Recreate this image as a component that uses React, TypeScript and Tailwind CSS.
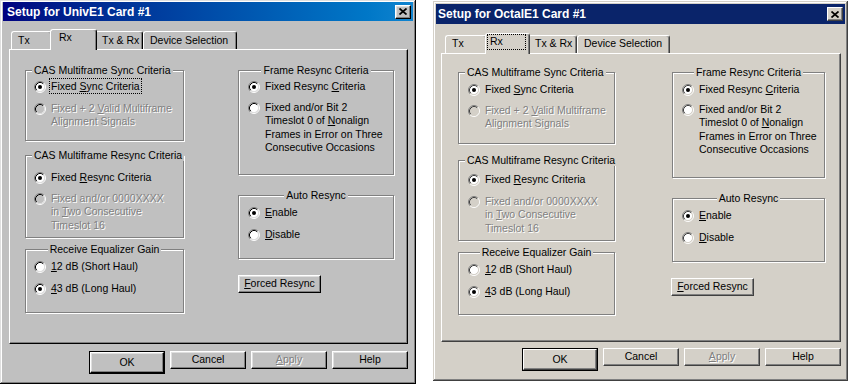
import type { ReactNode } from 'react';

type Skin = {
  face: string;
  dark: string;
  light: string;
  bg: string;
  edge: string;
  edgeR: string;
  btn: string;
};

const classic: Skin = {
  face: '#c0c0c0',
  dark: '#000000',
  light: '#dfdfdf',
  bg: 'bg-[#c0c0c0]',
  edge: 'border-r-black border-b-black',
  edgeR: 'border-r-black',
  btn: 'shadow-[inset_-1px_-1px_0_#808080,inset_1px_1px_0_#dfdfdf]',
};

const w2k: Skin = {
  face: '#d4d0c8',
  dark: '#404040',
  light: '#d4d0c8',
  bg: 'bg-[#d4d0c8]',
  edge: 'border-r-[#404040] border-b-[#404040]',
  edgeR: 'border-r-[#404040]',
  btn: 'shadow-[inset_-1px_-1px_0_#808080]',
};

const dim = 'text-[#808080] [text-shadow:1px_1px_0_#fff]';

function Radio({ skin, checked, disabled }: { skin: Skin; checked?: boolean; disabled?: boolean }) {
  return (
    <svg width="12" height="12" viewBox="0 0 12 12" className="mt-[1px] shrink-0">
      <circle cx="6" cy="6" r="4.5" fill={disabled ? skin.face : '#fff'} />
      <path d="M2.11 9.89A5.5 5.5 0 0 1 9.89 2.11" fill="none" stroke="#808080" />
      <path d="M2.82 9.18A4.5 4.5 0 0 1 9.18 2.82" fill="none" stroke={skin.dark} />
      <path d="M9.89 2.11A5.5 5.5 0 0 1 2.11 9.89" fill="none" stroke="#fff" />
      <path d="M9.18 2.82A4.5 4.5 0 0 1 2.82 9.18" fill="none" stroke={skin.light} />
      {checked && <circle cx="6" cy="6" r="2" fill="#000" />}
    </svg>
  );
}

function Option({
  skin,
  mt,
  checked,
  disabled,
  focus,
  children,
}: {
  skin: Skin;
  mt: string;
  checked?: boolean;
  disabled?: boolean;
  focus?: boolean;
  children: ReactNode;
}) {
  return (
    <div className={`flex items-start ${mt}`}>
      <Radio skin={skin} checked={checked} disabled={disabled} />
      <div className={`ml-[5px] leading-[13.5px] whitespace-nowrap ${disabled ? dim : ''}`}>
        {focus ? <span className="outline-1 outline-dotted outline-black outline-offset-[1px]">{children}</span> : children}
      </div>
    </div>
  );
}

function Group({
  skin,
  title,
  center,
  box,
  pad,
  children,
}: {
  skin: Skin;
  title: string;
  center?: boolean;
  box: string;
  pad: string;
  children: ReactNode;
}) {
  return (
    <div className={`border border-[#808080] shadow-[1px_1px_0_#fff,inset_1px_1px_0_#fff] ${box}`}>
      <div className={`-mt-[7px] flex h-[12px] leading-[12px] whitespace-nowrap ${center ? 'justify-center' : 'pl-[6px]'}`}>
        <span className={`px-[2px] ${skin.bg}`}>{title}</span>
      </div>
      <div className={pad}>{children}</div>
    </div>
  );
}

function Btn({
  skin,
  w,
  def,
  disabled,
  children,
}: {
  skin: Skin;
  w: string;
  def?: boolean;
  disabled?: boolean;
  children: ReactNode;
}) {
  const face = `flex h-full items-center justify-center border border-t-white border-l-white ${skin.edge} ${skin.btn} ${skin.bg} ${disabled ? dim : ''}`;
  if (def) {
    return (
      <div className={`${w} h-[23px] border border-black`}>
        <div className={face}>{children}</div>
      </div>
    );
  }
  return <div className={`${w} h-[23px] ${face}`}>{children}</div>;
}

function Close({ skin }: { skin: Skin }) {
  return (
    <div
      className={`flex h-[14px] w-[16px] items-center justify-center border border-t-white border-l-white ${skin.edge} ${skin.btn} ${skin.bg}`}
    >
      <svg width="8" height="7" viewBox="0 0 8 7">
        <path d="M0.5 0.5L7.5 6.5M7.5 0.5L0.5 6.5" stroke="#000" strokeWidth="1.7" />
      </svg>
    </div>
  );
}

function Tab({ skin, w, pad, children }: { skin: Skin; w: string; pad: string; children: ReactNode }) {
  return (
    <div
      className={`${w} h-[18px] rounded-t-[3px] border-t border-l border-r border-white ${skin.edgeR} shadow-[inset_-1px_0_0_#808080] pl-[6px] leading-[13px] whitespace-nowrap ${pad}`}
    >
      {children}
    </div>
  );
}

function ActiveTab({ skin, w, children }: { skin: Skin; w: string; children: ReactNode }) {
  return (
    <div
      className={`${w} relative z-10 -mx-[2px] -mb-[1px] h-[21px] rounded-t-[3px] border-t border-l border-r border-white ${skin.edgeR} shadow-[inset_-1px_0_0_#808080] ${skin.bg} leading-[13px]`}
    >
      {children}
    </div>
  );
}

function Panel({ skin, size, children }: { skin: Skin; size: string; children: ReactNode }) {
  return (
    <div className={`${size} border border-t-white border-l-white ${skin.edge} shadow-[inset_-1px_-1px_0_#808080] ${skin.bg}`}>
      {children}
    </div>
  );
}

function Footer({ skin, box }: { skin: Skin; box: string }) {
  return (
    <div className={`flex justify-end gap-[5px] ${box}`}>
      <Btn skin={skin} w="w-[76px]" def>
        OK
      </Btn>
      <Btn skin={skin} w="w-[76px]">
        Cancel
      </Btn>
      <Btn skin={skin} w="w-[76px]" disabled>
        <u>A</u>pply
      </Btn>
      <Btn skin={skin} w="w-[76px]">
        Help
      </Btn>
    </div>
  );
}

function UnivDialog() {
  const s = classic;
  return (
    <div className="h-[384px] w-[416px] shrink-0 bg-[#c0c0c0] px-[3px] pt-[2px] shadow-[inset_-1px_-1px_0_#000,inset_1px_1px_0_#dfdfdf,inset_-2px_-2px_0_#808080,inset_2px_2px_0_#fff]">
      <div className="flex h-[19px] items-center bg-linear-to-r from-[#000080] to-[#1084d0] pl-[4px] pr-[2px]">
        <span className="flex-1 text-[12px] leading-none font-bold text-white">Setup for UnivE1 Card #1</span>
        <Close skin={s} />
      </div>
      <div className="pl-[6px]">
        <div className="mt-[8px] flex h-[20px] items-end pl-[2px]">
          <Tab skin={s} w="w-[41px]" pad="pt-[2px]">
            Tx
          </Tab>
          <ActiveTab skin={s} w="w-[47px]">
            <div className="pt-[1px] pl-[8px]">Rx</div>
          </ActiveTab>
          <Tab skin={s} w="w-[48px]" pad="pt-[2px]">
            Tx &amp; Rx
          </Tab>
          <Tab skin={s} w="w-[94px]" pad="pt-[2px]">
            Device Selection
          </Tab>
        </div>
        <Panel skin={s} size="w-[399px] h-[295px]">
          <div className="flex pt-[20px] pl-[15px]">
            <div className="flex w-[159px] flex-col">
              <Group skin={s} title="CAS Multiframe Sync Criteria" box="h-[71px]" pad="pl-[8px]">
                <Option skin={s} mt="mt-[4px]" checked focus>
                  Fixed <u>S</u>ync Criteria
                </Option>
                <Option skin={s} mt="mt-[8px]" disabled>
                  Fixed + 2 <u>V</u>alid Multiframe
                  <br />
                  Alignment Signals
                </Option>
              </Group>
              <Group skin={s} title="CAS Multiframe Resync Criteria" box="mt-[14px] h-[83px]" pad="pl-[8px]">
                <Option skin={s} mt="mt-[10px]" checked>
                  Fixed <u>R</u>esync Criteria
                </Option>
                <Option skin={s} mt="mt-[7px]" disabled>
                  Fixed and/or 0000XXXX
                  <br />
                  in <u>T</u>wo Consecutive
                  <br />
                  Timeslot 16
                </Option>
              </Group>
              <Group skin={s} title="Receive Equalizer Gain" center box="mt-[11px] h-[64px]" pad="pl-[8px]">
                <Option skin={s} mt="mt-[5px]">
                  <u>1</u>2 dB (Short Haul)
                </Option>
                <Option skin={s} mt="mt-[8px]" checked>
                  <u>4</u>3 dB (Long Haul)
                </Option>
              </Group>
            </div>
            <div className="ml-[54px] flex w-[156px] flex-col items-start">
              <Group skin={s} title="Frame Resync Criteria" center box="w-full h-[105px]" pad="pl-[9px]">
                <Option skin={s} mt="mt-[4px]" checked>
                  Fixed Resync <u>C</u>riteria
                </Option>
                <Option skin={s} mt="mt-[7px]">
                  Fixed and/or Bit 2
                  <br />
                  Timeslot 0 of <u>N</u>onalign
                  <br />
                  Frames in Error on Three
                  <br />
                  Consecutive Occasions
                </Option>
              </Group>
              <Group skin={s} title="Auto Resync" center box="w-full mt-[20px] h-[64px]" pad="pl-[9px]">
                <Option skin={s} mt="mt-[5px]" checked>
                  <u>E</u>nable
                </Option>
                <Option skin={s} mt="mt-[8px]">
                  <u>D</u>isable
                </Option>
              </Group>
              <div className="mt-[16px]">
                <Btn skin={s} w="w-[83px]">
                  <u>F</u>orced Resync
                </Btn>
              </div>
            </div>
          </div>
        </Panel>
        <Footer skin={s} box="w-[399px] mt-[7px]" />
      </div>
    </div>
  );
}

function OctalDialog() {
  const s = w2k;
  return (
    <div className="mt-[1px] ml-[17px] h-[380px] w-[415px] shrink-0 bg-[#d4d0c8] px-[3px] pt-[3px] shadow-[inset_-1px_-1px_0_#404040,inset_1px_1px_0_#d4d0c8,inset_-2px_-2px_0_#808080,inset_2px_2px_0_#fff]">
      <div className="flex h-[20px] items-center bg-[#0a246a] pl-[2px] pr-[2px]">
        <span className="flex-1 text-[12px] leading-none font-bold text-white">Setup for OctalE1 Card #1</span>
        <Close skin={s} />
      </div>
      <div className="pl-[5px]">
        <div className="mt-[9px] flex h-[20px] items-end pl-[4px]">
          <Tab skin={s} w="w-[42px]" pad="pt-[1px]">
            Tx
          </Tab>
          <ActiveTab skin={s} w="w-[45px]">
            <div className="ml-[1px] h-[16px] w-[39px] border border-dotted border-black pl-[2px]">Rx</div>
          </ActiveTab>
          <Tab skin={s} w="w-[49px]" pad="pt-[1px]">
            Tx &amp; Rx
          </Tab>
          <Tab skin={s} w="w-[93px]" pad="pt-[1px]">
            Device Selection
          </Tab>
        </div>
        <Panel skin={s} size="w-[400px] h-[289px]">
          <div className="flex pt-[18px] pl-[16px]">
            <div className="flex w-[157px] flex-col">
              <Group skin={s} title="CAS Multiframe Sync Criteria" box="h-[72px]" pad="pl-[9px]">
                <Option skin={s} mt="mt-[5px]" checked>
                  Fixed <u>S</u>ync Criteria
                </Option>
                <Option skin={s} mt="mt-[7px]" disabled>
                  Fixed + 2 <u>V</u>alid Multiframe
                  <br />
                  Alignment Signals
                </Option>
              </Group>
              <Group skin={s} title="CAS Multiframe Resync Criteria" box="mt-[16px] h-[81px]" pad="pl-[9px]">
                <Option skin={s} mt="mt-[7px]" checked>
                  Fixed <u>R</u>esync Criteria
                </Option>
                <Option skin={s} mt="mt-[8px]" disabled>
                  Fixed and/or 0000XXXX
                  <br />
                  in <u>T</u>wo Consecutive
                  <br />
                  Timeslot 16
                </Option>
              </Group>
              <Group skin={s} title="Receive Equalizer Gain" center box="mt-[11px] h-[63px]" pad="pl-[9px]">
                <Option skin={s} mt="mt-[5px]">
                  <u>1</u>2 dB (Short Haul)
                </Option>
                <Option skin={s} mt="mt-[8px]" checked>
                  <u>4</u>3 dB (Long Haul)
                </Option>
              </Group>
            </div>
            <div className="ml-[57px] flex w-[153px] flex-col items-start">
              <Group skin={s} title="Frame Resync Criteria" center box="w-full h-[106px]" pad="pl-[9px]">
                <Option skin={s} mt="mt-[5px]" checked>
                  Fixed Resync <u>C</u>riteria
                </Option>
                <Option skin={s} mt="mt-[6px]">
                  Fixed and/or Bit 2
                  <br />
                  Timeslot 0 of <u>N</u>onalign
                  <br />
                  Frames in Error on Three
                  <br />
                  Consecutive Occasions
                </Option>
              </Group>
              <Group skin={s} title="Auto Resync" center box="w-full mt-[20px] h-[64px]" pad="pl-[9px]">
                <Option skin={s} mt="mt-[5px]" checked>
                  <u>E</u>nable
                </Option>
                <Option skin={s} mt="mt-[8px]">
                  <u>D</u>isable
                </Option>
              </Group>
              <div className="mt-[16px] -ml-[1px]">
                <Btn skin={s} w="w-[83px]">
                  <u>F</u>orced Resync
                </Btn>
              </div>
            </div>
          </div>
        </Panel>
        <Footer skin={s} box="w-[400px] mt-[6px]" />
      </div>
    </div>
  );
}

export default function App() {
  return (
    <div className="flex h-[384px] w-[848px] items-start overflow-hidden bg-white font-['Liberation_Sans',Arial,sans-serif] text-[10.5px] text-black">
      <UnivDialog />
      <OctalDialog />
    </div>
  );
}
